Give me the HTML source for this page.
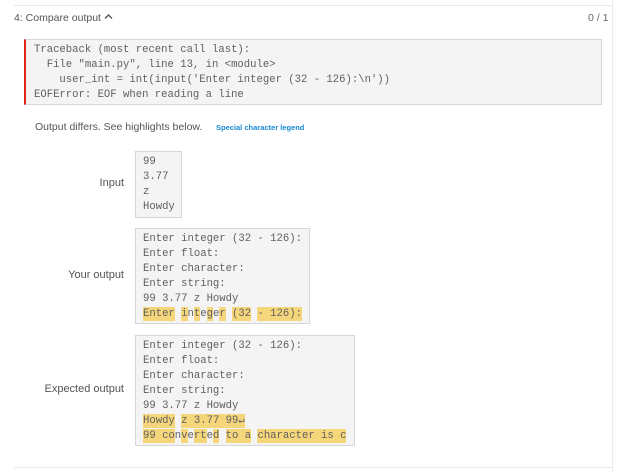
<!DOCTYPE html>
<html><head><style>
body{margin:0;width:630px;height:472px;background:#fff;position:relative;overflow:hidden;font-family:"Liberation Sans",sans-serif;}
.a{position:absolute}
.mono{font-family:"Liberation Mono",monospace;font-size:10.6px;line-height:15px;color:#606060;white-space:pre}
.box{position:absolute;background:#f4f4f4;border:1px solid #d6d6d6;box-sizing:border-box;padding:4px 0 0 7px}
.h{background:#f6d67a;display:inline-block;height:14px;vertical-align:top;line-height:15px}
.lbl{position:absolute;right:506px;font-size:11px;color:#555;text-align:right;white-space:nowrap}
</style></head><body>
<div class="a" style="left:14px;top:5px;width:598px;height:1px;background:#e8e8e8"></div>
<div class="a" style="left:612px;top:0;width:1px;height:472px;background:#ececec"></div>
<div class="a" style="left:14px;top:12px;font-size:10.5px;color:#555">4: Compare output <svg width="9" height="7" viewBox="0 0 9 7" style="vertical-align:1px"><path d="M1 5.5 L4.5 2 L8 5.5" fill="none" stroke="#555" stroke-width="1.4"/></svg></div>
<div class="a" style="left:588px;top:12px;font-size:10.5px;color:#666">0 / 1</div>
<div class="box mono" style="left:24px;top:39px;width:578px;height:66px;border-left:2px solid #e2231a;padding:3px 0 0 8px">Traceback (most recent call last):
  File "main.py", line 13, in &lt;module&gt;
    user_int = int(input('Enter integer (32 - 126):\n'))
EOFError: EOF when reading a line</div>
<div class="a" style="left:35px;top:121px;font-size:10.5px;color:#555">Output differs. See highlights below.</div>
<div class="a" style="left:216px;top:123px;font-size:7.5px;color:#1a8ad4;font-weight:bold">Special character legend</div>
<div class="lbl" style="top:177px">Input</div>
<div class="box mono" style="left:135px;top:151px;width:47px;height:67px;padding-top:3px">99
3.77
z
Howdy</div>
<div class="lbl" style="top:269px">Your output</div>
<div class="box mono" style="left:135px;top:228px;width:175px;height:96px;padding-top:3px">Enter integer (32 - 126):
Enter float:
Enter character:
Enter string:
99 3.77 z Howdy
<span class="h">Enter</span> <span class="h">i</span>n<span class="h">t</span>e<span class="h">g</span>e<span class="h">r</span> <span class="h">(32</span> <span class="h">- 126):</span></div>
<div class="lbl" style="top:383px">Expected output</div>
<div class="box mono" style="left:135px;top:335px;width:220px;height:111px;padding-top:3px">Enter integer (32 - 126):
Enter float:
Enter character:
Enter string:
99 3.77 z Howdy
<span class="h">Howdy</span> <span class="h">z 3.77 99↵</span>
<span class="h">99 co</span>n<span class="h">v</span>e<span class="h">rt</span>e<span class="h">d</span> <span class="h">to a</span> <span class="h">character is c</span></div>
<div class="a" style="left:14px;top:467px;width:598px;height:1px;background:#e8e8e8"></div>
</body></html>
